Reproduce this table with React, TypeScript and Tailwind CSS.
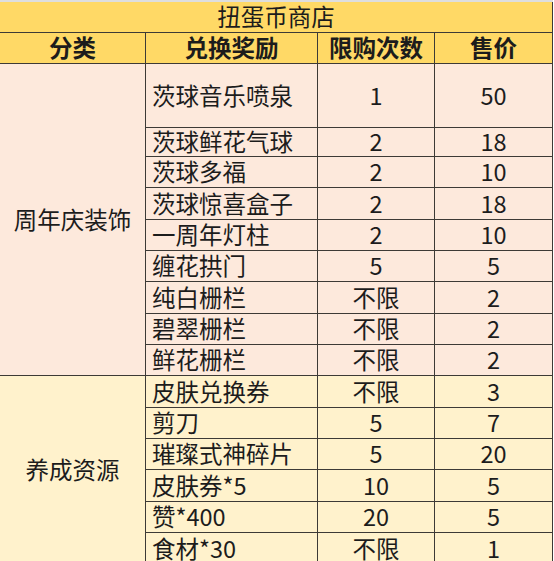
import React from 'react';

type Item = { name: string; limit: string; price: string; h: number };

const DECOR: Item[] = [
  { name: '茨球音乐喷泉', limit: '1', price: '50', h: 63 },
  { name: '茨球鲜花气球', limit: '2', price: '18', h: 28 },
  { name: '茨球多福', limit: '2', price: '10', h: 30 },
  { name: '茨球惊喜盒子', limit: '2', price: '18', h: 31 },
  { name: '一周年灯柱', limit: '2', price: '10', h: 30 },
  { name: '缠花拱门', limit: '5', price: '5', h: 30 },
  { name: '纯白栅栏', limit: '不限', price: '2', h: 31 },
  { name: '碧翠栅栏', limit: '不限', price: '2', h: 30 },
  { name: '鲜花栅栏', limit: '不限', price: '2', h: 30 },
];

const GROWTH: Item[] = [
  { name: '皮肤兑换券', limit: '不限', price: '3', h: 31 },
  { name: '剪刀', limit: '5', price: '7', h: 30 },
  { name: '璀璨式神碎片', limit: '5', price: '20', h: 30 },
  { name: '皮肤券*5', limit: '10', price: '5', h: 31 },
  { name: '赞*400', limit: '20', price: '5', h: 30 },
  { name: '食材*30', limit: '不限', price: '1', h: 31 },
];

function Section({ title, items, bg }: { title: string; items: Item[]; bg: string }) {
  return (
    <div className="flex gap-px">
      <div className={`flex w-[145px] shrink-0 items-center justify-center ${bg}`}>{title}</div>
      <div className="flex flex-1 flex-col gap-px">
        {items.map((it) => (
          <div key={it.name} className="flex gap-px" style={{ height: it.h }}>
            <div className={`flex w-[171px] items-center pl-[6px] ${bg}`}>{it.name}</div>
            <div className={`flex w-[116px] items-center justify-center ${bg}`}>{it.limit}</div>
            <div className={`flex w-[117px] items-center justify-center ${bg}`}>{it.price}</div>
          </div>
        ))}
      </div>
    </div>
  );
}

export default function App() {
  return (
    <div
      className="h-[561px] w-[554px] overflow-hidden bg-white text-[23.5px] leading-none text-[#1c1c1c]"
      style={{ fontFamily: '"Noto Sans CJK SC", "Noto Sans", sans-serif' }}
    >
      <div className="h-[2px] w-[553px] bg-[#dedede]" />
      <div className="flex w-[553px] flex-col gap-px bg-[#3d3a36] pr-px pb-px">
        <div className="flex h-[30px] items-center justify-center bg-[#ffd966]">扭蛋币商店</div>
        <div className="flex h-[30px] gap-px font-bold">
          <div className="flex w-[145px] items-center justify-center bg-[#ffd966]">分类</div>
          <div className="flex w-[171px] items-center justify-center bg-[#ffd966]">兑换奖励</div>
          <div className="flex w-[116px] items-center justify-center bg-[#ffd966]">限购次数</div>
          <div className="flex w-[117px] items-center justify-center bg-[#ffd966]">售价</div>
        </div>
        <Section title="周年庆装饰" items={DECOR} bg="bg-[#fde9dc]" />
        <Section title="养成资源" items={GROWTH} bg="bg-[#fff2cc]" />
      </div>
    </div>
  );
}
